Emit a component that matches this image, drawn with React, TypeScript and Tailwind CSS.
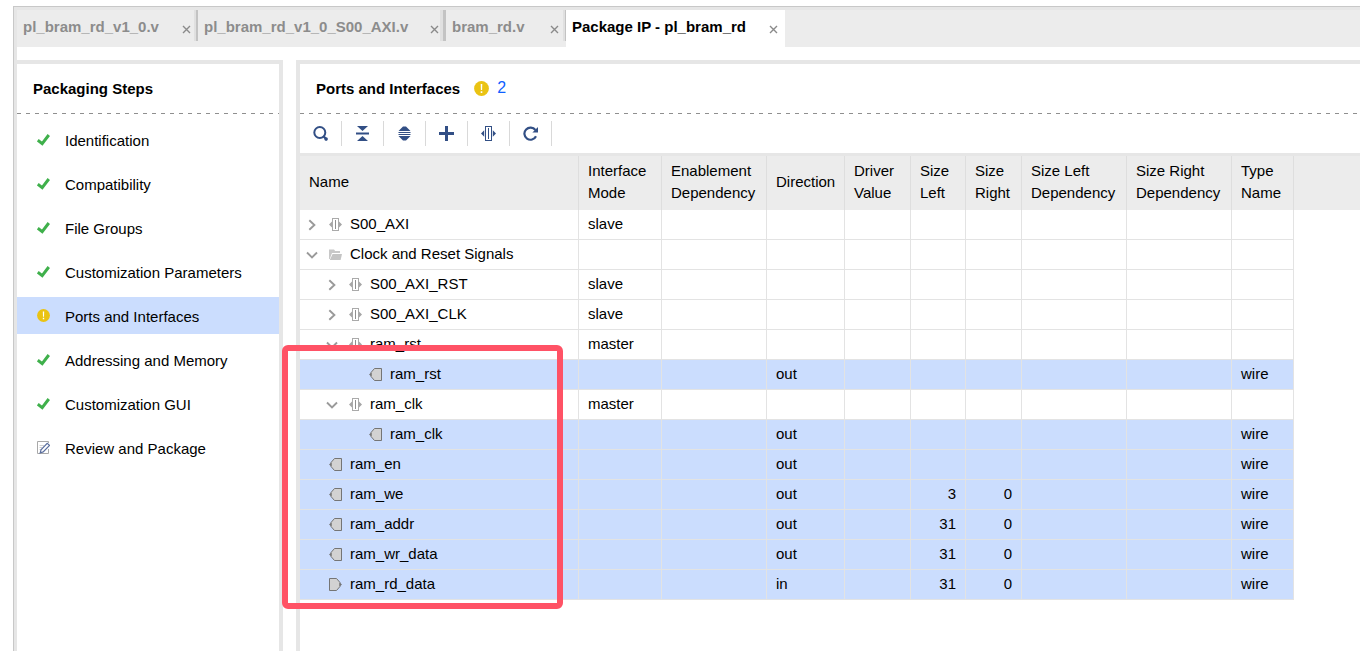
import type { ReactNode } from 'react';

type IconProps = { className?: string };

const CloseIcon = () => (
  <svg width="9" height="9" viewBox="0 0 9 9" className="block" aria-hidden="true">
    <path d="M1 1 L8 8 M8 1 L1 8" stroke="#8a8a8a" strokeWidth="1.4" fill="none" />
  </svg>
);

const CheckIcon = () => (
  <svg width="13" height="12" viewBox="0 0 13 12" aria-hidden="true">
    <path d="M0.8 6.2 L5.2 9.6 L11.8 1" stroke="#3fb04b" strokeWidth="3" fill="none" />
  </svg>
);

const WarningIcon = ({ className }: IconProps) => (
  <svg viewBox="0 0 15 15" className={className} aria-hidden="true">
    <circle cx="7.5" cy="7.5" r="7.4" fill="#eac313" />
    <path d="M6.7 3 H8.3 L8.1 9 H6.9 Z M6.7 10.2 H8.3 V11.9 H6.7 Z" fill="#fff" />
  </svg>
);

const EditIcon = () => (
  <svg width="13" height="13" viewBox="0 0 13 13" aria-hidden="true">
    <path d="M11.5 2 V0.5 H0.5 V12.5 H11.5 V8" stroke="#a9a9a9" fill="none" />
    <path d="M2.5 4.5 H7 M2.5 6.5 H5 M2.5 8.5 H4" stroke="#d0d0d0" fill="none" />
    <path d="M3.2 11.8 L4 8.8 L10.2 2.4 L12.5 4.4 L6.2 10.9 Z" stroke="#5b6f9e" strokeWidth="1.2" fill="#fff" />
  </svg>
);

const SearchIcon = () => (
  <svg width="15" height="15" viewBox="0 0 15 15" aria-hidden="true">
    <circle cx="6.8" cy="6.5" r="5.5" stroke="#324f85" strokeWidth="2" fill="none" />
    <path d="M10.4 10.2 L12.6 12.4" stroke="#324f85" strokeWidth="2.2" />
    <circle cx="13.1" cy="13.1" r="1.8" fill="#324f85" />
  </svg>
);

const CollapseIcon = () => (
  <svg width="15" height="15" viewBox="0 0 15 15" aria-hidden="true">
    <path d="M2 0 H13 L7.5 5 Z M2 15 H13 L7.5 10 Z M1 6.5 H14 V8.5 H1 Z" fill="#324f85" />
  </svg>
);

const ExpandIcon = () => (
  <svg width="15" height="15" viewBox="0 0 15 15" aria-hidden="true">
    <path d="M1.5 5 H13.5 L9 0.5 H6 Z M1.5 10 H13.5 L9 14.5 H6 Z" fill="#324f85" />
    <path d="M1.5 6 H13.5 V7 H1.5 Z M1.5 8 H13.5 V9 H1.5 Z" fill="#324f85" />
  </svg>
);

const PlusIcon = () => (
  <svg width="15" height="15" viewBox="0 0 15 15" aria-hidden="true">
    <path d="M6 0 H9 V6 H15 V9 H9 V15 H6 V9 H0 V6 H6 Z" fill="#324f85" />
  </svg>
);

const BusIcon = () => (
  <svg width="15" height="15" viewBox="0 0 15 15" aria-hidden="true">
    <path d="M0 7.5 L3.2 4.3 V10.7 Z M15 7.5 L11.8 4.3 V10.7 Z" fill="#324f85" />
    <rect x="4.5" y="0.5" width="6" height="14" stroke="#324f85" fill="#fff" />
    <path d="M7.5 2 V13" stroke="#324f85" />
  </svg>
);

const RefreshIcon = () => (
  <svg width="15" height="15" viewBox="0 0 15 15" aria-hidden="true">
    <path d="M12.4 4 A6.1 6.1 0 1 0 13 10.3" stroke="#324f85" strokeWidth="2.2" fill="none" />
    <path d="M15 1 V6.6 H9.4 Z" fill="#324f85" />
  </svg>
);

const ChevronRight = () => (
  <svg width="12" height="12" viewBox="0 0 12 12" aria-hidden="true">
    <path d="M3.3 1.2 L8.4 6 L3.3 10.8" stroke="#9a9a9a" strokeWidth="1.9" fill="none" />
  </svg>
);

const ChevronDown = () => (
  <svg width="12" height="12" viewBox="0 0 12 12" aria-hidden="true">
    <path d="M1 3.5 L6 8.4 L11 3.5" stroke="#9a9a9a" strokeWidth="1.9" fill="none" />
  </svg>
);

const InterfaceIcon = () => (
  <svg width="13" height="13" viewBox="0 0 13 13" aria-hidden="true">
    <path d="M0 6.5 L3 3.4 V9.6 Z M13 6.5 L10 3.4 V9.6 Z" fill="#a6a6a6" />
    <rect x="3.5" y="0.5" width="6" height="12" stroke="#aaaaaa" fill="#fff" />
    <path d="M6.5 2 V11" stroke="#8f8f8f" />
  </svg>
);

const FolderIcon = () => (
  <svg width="13" height="13" viewBox="0 0 13 13" aria-hidden="true">
    <path d="M0 11 V1.5 H5 L6.2 3 H11 V5 H3 L0.8 11 Z" fill="#c8c8c8" />
    <path d="M3.6 6 H13 L11.6 12 H0.8 Z" fill="#c4c4c4" />
  </svg>
);

const OutPortIcon = () => (
  <svg width="13" height="13" viewBox="0 0 13 13" aria-hidden="true">
    <path d="M12.5 0.5 H5.5 L2 4.5 V8.5 L5.5 12.5 H12.5 Z" stroke="#757575" fill="#d2d2d2" />
    <path d="M0 6.5 L2.5 4.5 V8.5 Z" fill="#757575" />
  </svg>
);

const InPortIcon = () => (
  <svg width="13" height="13" viewBox="0 0 13 13" aria-hidden="true">
    <path d="M0.5 0.5 H7.5 L11 4.5 V8.5 L7.5 12.5 H0.5 Z" stroke="#757575" fill="#d2d2d2" />
    <path d="M13 6.5 L10.5 4.5 V8.5 Z" fill="#757575" />
  </svg>
);

const tabs = [
  { title: 'pl_bram_rd_v1_0.v', box: 'w-[181px] border-r-2', gap: 'border-r-2 pr-[3px]' },
  { title: 'pl_bram_rd_v1_0_S00_AXI.v', box: 'w-[248px] border-r-3', gap: 'border-r-3 pr-px' },
  { title: 'bram_rd.v', box: 'w-[120px] border-r', gap: 'border-r-2 pr-1' },
];

const steps: { label: string; icon: ReactNode; current?: boolean }[] = [
  { label: 'Identification', icon: <CheckIcon /> },
  { label: 'Compatibility', icon: <CheckIcon /> },
  { label: 'File Groups', icon: <CheckIcon /> },
  { label: 'Customization Parameters', icon: <CheckIcon /> },
  { label: 'Ports and Interfaces', icon: <WarningIcon className="size-[13px]" />, current: true },
  { label: 'Addressing and Memory', icon: <CheckIcon /> },
  { label: 'Customization GUI', icon: <CheckIcon /> },
  { label: 'Review and Package', icon: <EditIcon /> },
];

const tools = [
  { label: 'Search', icon: <SearchIcon /> },
  { label: 'Collapse all', icon: <CollapseIcon /> },
  { label: 'Expand all', icon: <ExpandIcon /> },
  { label: 'Add', icon: <PlusIcon /> },
  { label: 'Add interface', icon: <BusIcon /> },
  { label: 'Refresh', icon: <RefreshIcon /> },
];

const columns = [
  { lines: ['Name'], width: 'w-[279px]' },
  { lines: ['Interface', 'Mode'], width: 'w-[83px]' },
  { lines: ['Enablement', 'Dependency'], width: 'w-[105px]' },
  { lines: ['Direction'], width: 'w-[78px]' },
  { lines: ['Driver', 'Value'], width: 'w-[66px]' },
  { lines: ['Size', 'Left'], width: 'w-[55px]' },
  { lines: ['Size', 'Right'], width: 'w-[56px]' },
  { lines: ['Size Left', 'Dependency'], width: 'w-[105px]' },
  { lines: ['Size Right', 'Dependency'], width: 'w-[105px]' },
  { lines: ['Type', 'Name'], width: 'w-[62px]' },
];

type Kind = 'interface' | 'folder' | 'out' | 'in';
type Row = {
  name: string;
  kind: Kind;
  depth: number;
  toggle?: 'open' | 'closed';
  mode?: string;
  direction?: string;
  left?: string;
  right?: string;
};

const rows: Row[] = [
  { name: 'S00_AXI', kind: 'interface', depth: 0, toggle: 'closed', mode: 'slave' },
  { name: 'Clock and Reset Signals', kind: 'folder', depth: 0, toggle: 'open' },
  { name: 'S00_AXI_RST', kind: 'interface', depth: 1, toggle: 'closed', mode: 'slave' },
  { name: 'S00_AXI_CLK', kind: 'interface', depth: 1, toggle: 'closed', mode: 'slave' },
  { name: 'ram_rst', kind: 'interface', depth: 1, toggle: 'open', mode: 'master' },
  { name: 'ram_rst', kind: 'out', depth: 2, direction: 'out' },
  { name: 'ram_clk', kind: 'interface', depth: 1, toggle: 'open', mode: 'master' },
  { name: 'ram_clk', kind: 'out', depth: 2, direction: 'out' },
  { name: 'ram_en', kind: 'out', depth: 0, direction: 'out' },
  { name: 'ram_we', kind: 'out', depth: 0, direction: 'out', left: '3', right: '0' },
  { name: 'ram_addr', kind: 'out', depth: 0, direction: 'out', left: '31', right: '0' },
  { name: 'ram_wr_data', kind: 'out', depth: 0, direction: 'out', left: '31', right: '0' },
  { name: 'ram_rd_data', kind: 'in', depth: 0, direction: 'in', left: '31', right: '0' },
];

const indents = ['pl-1.5', 'pl-[26px]', 'pl-[46px]'];

const kindIcons: Record<Kind, ReactNode> = {
  interface: <InterfaceIcon />,
  folder: <FolderIcon />,
  out: <OutPortIcon />,
  in: <InPortIcon />,
};

const DashedLine = () => (
  <div className="h-px bg-[repeating-linear-gradient(to_right,#8f8f8f_0,#8f8f8f_4px,transparent_4px,transparent_9px)]" />
);

function TabBar() {
  return (
    <div className="flex h-[37px] items-start bg-[#ececec] font-bold text-[#8c8c8c]">
      {tabs.map((tab) => (
        <div key={tab.title} className={`flex h-[31px] shrink-0 border-[#c3c3c3] ${tab.box}`}>
          <div className={`flex grow items-start justify-between border-[#e0e0e0] pl-1.5 ${tab.gap}`}>
            <button type="button" className="pt-[7px] leading-5">{tab.title}</button>
            <button type="button" aria-label={`Close ${tab.title}`} className="pt-[15px]"><CloseIcon /></button>
          </div>
        </div>
      ))}
      <div className="flex h-full w-[219px] shrink-0 items-start justify-between bg-white pr-[7px] pl-1.5 text-black">
        <button type="button" className="pt-[7px] leading-5">Package IP - pl_bram_rd</button>
        <button type="button" aria-label="Close Package IP" className="pt-[15px]"><CloseIcon /></button>
      </div>
    </div>
  );
}

function StepsPanel() {
  return (
    <nav className="w-[266px] shrink-0 border-t-4 border-r-4 border-[#e6e6e6]">
      <h2 className="flex h-[49px] items-center pl-4 font-bold">Packaging Steps</h2>
      <DashedLine />
      <ul className="flex flex-col gap-[7px] pt-[7px]">
        {steps.map((step) => (
          <li key={step.label}>
            <button
              type="button"
              className={`flex h-[37px] w-full items-center pl-5 text-left ${step.current ? 'bg-[#cbddfe]' : ''}`}
            >
              <span className="flex w-7 items-center">{step.icon}</span>
              <span className="pt-0.5">{step.label}</span>
            </button>
          </li>
        ))}
      </ul>
    </nav>
  );
}

function PortsTable() {
  return (
    <table className="w-full table-fixed border-separate border-spacing-0">
      <thead>
        <tr className="h-[54px] bg-[#ececec] text-left">
          {columns.map((column) => (
            <th
              key={column.lines.join(' ')}
              scope="col"
              className={`border-r border-[#dedede] pt-0 pr-0 pb-0.5 pl-[9px] leading-[22px] font-normal ${column.width}`}
            >
              {column.lines.map((line) => (
                <span key={line} className="block">{line}</span>
              ))}
            </th>
          ))}
          <td />
        </tr>
      </thead>
      <tbody>
        {rows.map((row, index) => (
          <tr key={index} className="h-[30px]">
            {[
              <div key="name" className={`flex items-center ${indents[row.depth]}`}>
                <span className="flex w-[23px] items-center pt-0.5">
                  {row.toggle === 'open' && <ChevronDown />}
                  {row.toggle === 'closed' && <ChevronRight />}
                </span>
                <span className="flex w-[21px] items-center pt-0.5">{kindIcons[row.kind]}</span>
                {row.name}
              </div>,
              row.mode,
              '',
              row.direction,
              '',
              row.left,
              row.right,
              '',
              '',
              row.direction && 'wire',
            ].map((content, column) => (
              <td
                key={column}
                className={`border-r border-b border-[#e3e3e3] pt-0 pr-[9px] pb-0.5 leading-5 ${column === 0 ? 'pl-0' : 'pl-[9px]'} ${column === 5 || column === 6 ? 'text-right' : ''} ${row.direction ? 'bg-[#cbddfe]' : ''}`}
              >
                {content}
              </td>
            ))}
            <td />
          </tr>
        ))}
      </tbody>
    </table>
  );
}

function PortsPanel() {
  return (
    <main className="min-w-0 grow border-t-4 border-l-4 border-[#e6e6e6]">
      <div className="flex h-[49px] items-center pl-4">
        <h1 className="font-bold">Ports and Interfaces</h1>
        <WarningIcon className="ml-3.5 size-[15px]" />
        <a href="#messages" className="ml-2 pb-0.5 text-base text-[#0f5fff]">2</a>
      </div>
      <DashedLine />
      <div className="flex h-[39px] items-center">
        {tools.map((tool) => (
          <button
            key={tool.label}
            type="button"
            aria-label={tool.label}
            className="flex h-[25px] w-[42px] items-center justify-center border-r border-[#d9d9d9]"
          >
            {tool.icon}
          </button>
        ))}
      </div>
      <div className="relative border-t-3 border-[#e6e6e6]">
        <PortsTable />
        <div className="pointer-events-none absolute top-[189px] -left-[18px] h-[264px] w-[281px] rounded-md border-6 border-[#ff5265]" />
      </div>
    </main>
  );
}

export default function App() {
  return (
    <div className="flex min-h-screen flex-col bg-white pt-1.5 pl-[13px] font-['Liberation_Sans',Arial,sans-serif] text-[15px] leading-5 text-black">
      <div className="flex grow flex-col border-t border-l border-[#c8c8c8]">
        <div className="flex grow flex-col border-t-3 border-l-3 border-[#e6e6e6]">
          <TabBar />
          <div className="flex grow gap-[13px] pt-[13px]">
            <StepsPanel />
            <PortsPanel />
          </div>
        </div>
      </div>
    </div>
  );
}
